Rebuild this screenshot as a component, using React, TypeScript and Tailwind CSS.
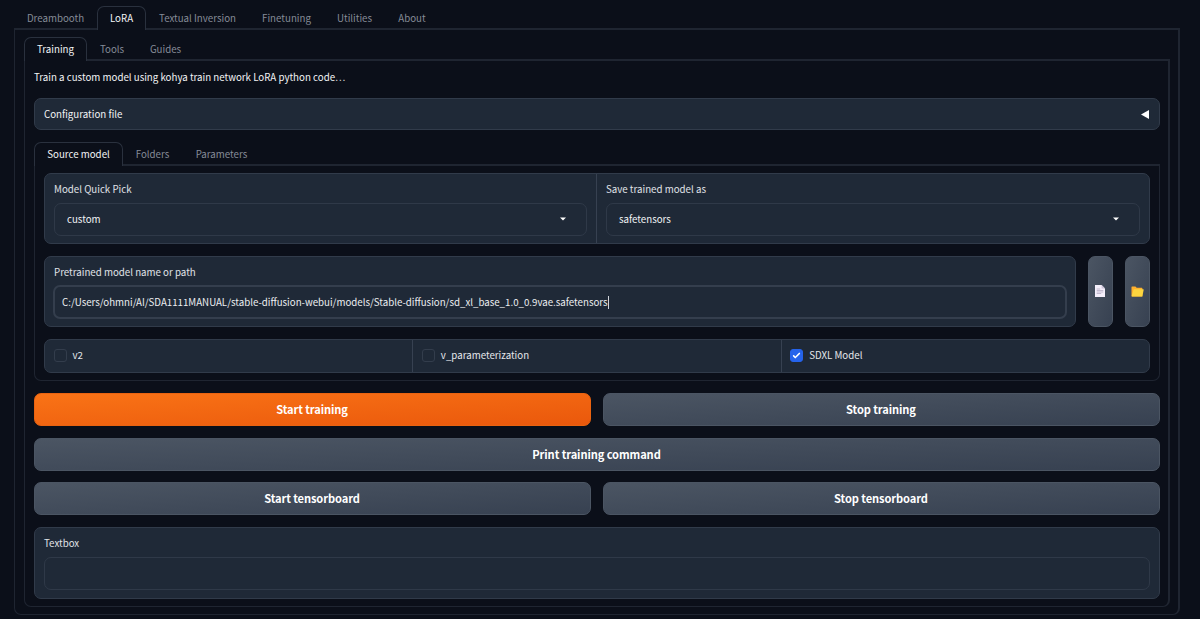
import React, { useState } from 'react';
import clsx from 'clsx';

interface TabItem {
  label: string;
  width: string;
}

interface TabsProps {
  items: TabItem[];
  initial: string;
  className?: string;
  children: React.ReactNode;
}

const Tabs: React.FC<TabsProps> = ({ items, initial, className, children }) => {
  const [active, setActive] = useState(initial);

  return (
    <div className={className}>
      <div className="relative z-10 -mb-[2px] flex h-[24px]">
        {items.map((item) => (
          <button
            key={item.label}
            onClick={() => setActive(item.label)}
            className={clsx(
              'h-[24px] shrink-0 whitespace-nowrap rounded-t-[7px] border border-b-0 pb-[1px] text-center leading-[22px]',
              item.width,
              active === item.label
                ? 'border-[#2a313e] bg-[#0b0f19] text-[#f3f4f6]'
                : 'border-transparent text-[#858b97]'
            )}
          >
            {item.label}
          </button>
        ))}
      </div>
      {children}
    </div>
  );
};

interface BlockProps {
  className?: string;
  children?: React.ReactNode;
}

const Block: React.FC<BlockProps> = ({ className, children }) => (
  <div className={clsx('rounded-[7px] border border-[#313b4a] bg-[#1f2937]', className)}>{children}</div>
);

const Select: React.FC<{ label: string; value: string; className: string }> = ({ label, value, className }) => (
  <div className={clsx('px-[9px] pt-[8px]', className)}>
    <div className="h-[21px] leading-[15px] text-[#e0e3e8]">{label}</div>
    <div className="flex h-[33px] items-center justify-between rounded-[7px] border border-[#2f3948] pb-px pl-3 pr-5 text-[#f3f4f6]">
      <span>{value}</span>
      <svg width="6" height="4" viewBox="0 0 6 4" fill="#fff">
        <path d="M0 .5h6L3 3.6z" />
      </svg>
    </div>
  </div>
);

const Checkbox: React.FC<{ label: string; initial?: boolean }> = ({ label, initial = false }) => {
  const [checked, setChecked] = useState(initial);

  return (
    <button
      onClick={() => setChecked(!checked)}
      className="flex flex-1 items-center gap-[6px] border-l border-[#374151] pb-px pl-[8.5px] text-left text-[#e5e7eb] first:border-l-0"
    >
      <span
        className={clsx(
          'flex size-[13px] items-center justify-center rounded-[3px] border',
          checked ? 'border-[#2563eb] bg-[#2563eb]' : 'border-[#333d4c]'
        )}
      >
        {checked && (
          <svg width="13" height="13" viewBox="0 0 16 16" fill="#fff" className="shrink-0">
            <path d="M12.207 4.793a1 1 0 010 1.414l-5 5a1 1 0 01-1.414 0l-2-2a1 1 0 011.414-1.414L6.5 9.086l4.293-4.293a1 1 0 011.414 0z" />
          </svg>
        )}
      </span>
      <span>{label}</span>
    </button>
  );
};

const Button: React.FC<{ label: string; primary?: boolean }> = ({ label, primary }) => (
  <button
    className={clsx(
      'h-[33px] flex-1 rounded-[7px] border pb-px pr-px text-[11.1px] font-bold leading-[29px] tracking-[-0.09px] text-white',
      primary
        ? 'border-[#ea6310] bg-[linear-gradient(to_bottom_right,#f97316,#ea580c)]'
        : 'border-[#4b5563] bg-[linear-gradient(to_bottom_right,#4b5563,#374151)]'
    )}
  >
    {label}
  </button>
);

const IconButton: React.FC<{ label: string; children: React.ReactNode }> = ({ label, children }) => (
  <button
    aria-label={label}
    className="flex h-[71px] w-[25px] items-center justify-center rounded-[7px] border border-[#4b5563] bg-[linear-gradient(to_bottom_right,#4b5563,#374151)] pb-px pr-px"
  >
    {children}
  </button>
);

const mainTabs: TabItem[] = [
  { label: 'Dreambooth', width: 'w-[83px]' },
  { label: 'LoRA', width: 'w-[49px]' },
  { label: 'Textual Inversion', width: 'w-[103px]' },
  { label: 'Finetuning', width: 'w-[75px]' },
  { label: 'Utilities', width: 'w-[61px]' },
  { label: 'About', width: 'w-[54px]' },
];

const loraTabs: TabItem[] = [
  { label: 'Training', width: 'w-[63px]' },
  { label: 'Tools', width: 'w-[50px]' },
  { label: 'Guides', width: 'w-[57px]' },
];

const modelTabs: TabItem[] = [
  { label: 'Source model', width: 'w-[89px]' },
  { label: 'Folders', width: 'w-[59px]' },
  { label: 'Parameters', width: 'w-[79px]' },
];

const SourceModel: React.FC = () => (
  <div className="flex flex-col gap-3 rounded-b-[7px] border border-t-2 border-[#1f2531] px-[9px] pb-[7px] pt-[7px]">
    <Block className="flex h-[71px]">
      <Select label="Model Quick Pick" value="custom" className="w-[551px]" />
      <div className="w-px bg-[#374151]" />
      <Select label="Save trained model as" value="safetensors" className="flex-1" />
    </Block>

    <div className="flex justify-between">
      <Block className="h-[71px] w-[1032px] px-2 pt-[8px]">
        <div className="h-[20px] pl-px leading-[15px] text-[#e0e3e8]">Pretrained model name or path</div>
        <div className="flex h-[34px] items-center rounded-[7px] border-2 border-[#343e4d] pl-[7px] text-[9.71px] text-[#eceef1]">
          <span>C:/Users/ohmni/AI/SDA1111MANUAL/stable-diffusion-webui/models/Stable-diffusion/sd_xl_base_1.0_0.9vae.safetensors</span>
          <span className="h-[13px] w-px bg-[#d1d5db]" />
        </div>
      </Block>
      <IconButton label="Pick file">
        <svg width="10" height="12" viewBox="0 0 10 12">
          <path d="M0 0h6.6L10 3.4V12H0z" fill="#f4eefa" />
          <path d="M6.6 0L10 3.4H6.6z" fill="#cdc4d9" />
          <path d="M1.7 4h3.5M1.7 5.5h6.6M1.7 7h6.6M1.7 8.5h4.5" stroke="#c3bacf" strokeWidth="1" />
        </svg>
      </IconButton>
      <IconButton label="Pick folder">
        <svg width="13" height="11" viewBox="0 0 13 11">
          <path d="M.5 1q0-.6.6-.6h3.3l1.3 1.3h5q.7 0 .7.7V10.4H1.1q-.6 0-.6-.6z" fill="#ffb02e" />
          <path d="M3.3 3.2h8.9q.6 0 .5.6l-1.3 6.1q-.1.6-.7.6H1.1q-.5 0-.4-.5l1.8-6.2q.2-.6.8-.6z" fill="#fcd53f" />
        </svg>
      </IconButton>
    </div>

    <Block className="flex h-[34px]">
      <Checkbox label="v2" />
      <Checkbox label="v_parameterization" />
      <Checkbox label="SDXL Model" initial />
    </Block>
  </div>
);

const App: React.FC = () => (
  <div className="h-[619px] w-[1200px] overflow-hidden bg-[#0b0f19] pl-[14px] pt-[6px] font-['Noto_Sans_CJK_SC','Noto_Sans',sans-serif] text-[9.72px]">
    <Tabs items={mainTabs} initial="LoRA" className="w-[1166px]">
      <div className="h-[587px] rounded-b-[7px] border-2 border-l border-b border-[#1f2531] pl-[9px] pr-2 pt-[7px]">
        <Tabs items={loraTabs} initial="Training">
          <div className="h-[548px] rounded-b-[7px] border-2 border-l border-b border-[#1f2531] pl-[9px] pr-2 pt-[8px]">
            <p className="h-[29px] leading-[17px] text-[#f3f4f6]">
              Train a custom model using kohya train network LoRA python code…
            </p>

            <Block className="mb-3 flex h-[32px] items-center justify-between px-[9px] text-[#f3f4f6]">
              <span>Configuration file</span>
              <svg width="8" height="9" viewBox="0 0 8 9" fill="#fff" className="mr-px">
                <path d="M0 4.5L8 0v9z" />
              </svg>
            </Block>

            <Tabs items={modelTabs} initial="Source model">
              <SourceModel />
            </Tabs>

            <div className="mt-3 flex flex-col gap-3">
              <div className="flex gap-3">
                <Button label="Start training" primary />
                <Button label="Stop training" />
              </div>
              <div className="-mb-px flex">
                <Button label="Print training command" />
              </div>
              <div className="flex gap-3">
                <Button label="Start tensorboard" />
                <Button label="Stop tensorboard" />
              </div>
              <Block className="h-[72px] px-[9px] pt-[8px]">
                <div className="h-[21px] leading-[15px] text-[#e0e3e8]">Textbox</div>
                <div className="h-[33px] rounded-[7px] border border-[#2f3948]" />
              </Block>
            </div>
          </div>
        </Tabs>
      </div>
    </Tabs>
  </div>
);

export default App;
